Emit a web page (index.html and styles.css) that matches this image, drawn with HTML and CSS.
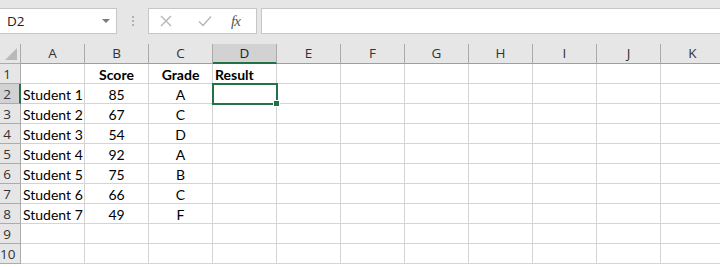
FILE: index.html
```html
<!DOCTYPE html>
<html lang="en">
<head>
  <meta charset="UTF-8" />
  <title>Sheet</title>
  <link rel="stylesheet" href="styles.css">
</head>
<body>
  <div class="formula-row">
    <div class="name-box">
      <span>D2</span>
      <span class="drop-arrow"></span>
    </div>
    <div class="grip">
      <span></span><span></span><span></span>
    </div>
    <div class="fx-buttons">
      <svg class="fx-cancel" width="12" height="12" viewBox="0 0 12 12"><path d="M1 1 L11 11 M11 1 L1 11" stroke="#b4b4b4" stroke-width="1.3" fill="none"/></svg>
      <svg class="fx-enter" width="14" height="12" viewBox="0 0 14 12"><path d="M1 6.5 L5 10.5 L13 1.5" stroke="#b4b4b4" stroke-width="1.3" fill="none"/></svg>
      <span class="fx-label">fx</span>
    </div>
    <div class="formula-input"></div>
  </div>

  <div class="sheet">
    <div class="corner"><span class="corner-tri"></span></div>
    <div class="col-head">A</div>
    <div class="col-head">B</div>
    <div class="col-head">C</div>
    <div class="col-head active">D</div>
    <div class="col-head">E</div>
    <div class="col-head">F</div>
    <div class="col-head">G</div>
    <div class="col-head">H</div>
    <div class="col-head">I</div>
    <div class="col-head">J</div>
    <div class="col-head">K</div>

    <div class="row-head">1</div>
    <div class="cell"></div>
    <div class="cell bold center">Score</div>
    <div class="cell bold center">Grade</div>
    <div class="cell bold">Result</div>
    <div class="cell"></div><div class="cell"></div><div class="cell"></div><div class="cell"></div><div class="cell"></div><div class="cell"></div><div class="cell"></div>

    <div class="row-head active">2</div>
    <div class="cell">Student 1</div>
    <div class="cell center">85</div>
    <div class="cell center">A</div>
    <div class="cell selected"></div>
    <div class="cell"></div><div class="cell"></div><div class="cell"></div><div class="cell"></div><div class="cell"></div><div class="cell"></div><div class="cell"></div>

    <div class="row-head">3</div>
    <div class="cell">Student 2</div>
    <div class="cell center">67</div>
    <div class="cell center">C</div>
    <div class="cell"></div>
    <div class="cell"></div><div class="cell"></div><div class="cell"></div><div class="cell"></div><div class="cell"></div><div class="cell"></div><div class="cell"></div>

    <div class="row-head">4</div>
    <div class="cell">Student 3</div>
    <div class="cell center">54</div>
    <div class="cell center">D</div>
    <div class="cell"></div>
    <div class="cell"></div><div class="cell"></div><div class="cell"></div><div class="cell"></div><div class="cell"></div><div class="cell"></div><div class="cell"></div>

    <div class="row-head">5</div>
    <div class="cell">Student 4</div>
    <div class="cell center">92</div>
    <div class="cell center">A</div>
    <div class="cell"></div>
    <div class="cell"></div><div class="cell"></div><div class="cell"></div><div class="cell"></div><div class="cell"></div><div class="cell"></div><div class="cell"></div>

    <div class="row-head">6</div>
    <div class="cell">Student 5</div>
    <div class="cell center">75</div>
    <div class="cell center">B</div>
    <div class="cell"></div>
    <div class="cell"></div><div class="cell"></div><div class="cell"></div><div class="cell"></div><div class="cell"></div><div class="cell"></div><div class="cell"></div>

    <div class="row-head">7</div>
    <div class="cell">Student 6</div>
    <div class="cell center">66</div>
    <div class="cell center">C</div>
    <div class="cell"></div>
    <div class="cell"></div><div class="cell"></div><div class="cell"></div><div class="cell"></div><div class="cell"></div><div class="cell"></div><div class="cell"></div>

    <div class="row-head">8</div>
    <div class="cell">Student 7</div>
    <div class="cell center">49</div>
    <div class="cell center">F</div>
    <div class="cell"></div>
    <div class="cell"></div><div class="cell"></div><div class="cell"></div><div class="cell"></div><div class="cell"></div><div class="cell"></div><div class="cell"></div>

    <div class="row-head">9</div>
    <div class="cell"></div><div class="cell"></div><div class="cell"></div><div class="cell"></div>
    <div class="cell"></div><div class="cell"></div><div class="cell"></div><div class="cell"></div><div class="cell"></div><div class="cell"></div><div class="cell"></div>

    <div class="row-head">10</div>
    <div class="cell"></div><div class="cell"></div><div class="cell"></div><div class="cell"></div>
    <div class="cell"></div><div class="cell"></div><div class="cell"></div><div class="cell"></div><div class="cell"></div><div class="cell"></div><div class="cell"></div>
  </div>
</body>
</html>
```

FILE: styles.css
```css
body {
  margin: 0;
  background: #fff;
  font-family: 'Lato', 'Liberation Sans', sans-serif;
  overflow: hidden;
  width: 720px;
  height: 267px;
}

.formula-row {
  height: 44px;
  display: flex;
  align-items: flex-start;
  padding-top: 8px;
  box-sizing: border-box;
  background: #e6e6e6;
}

.name-box {
  width: 117px;
  height: 26px;
  box-sizing: border-box;
  background: #fff;
  border: 1px solid #c6c6c6;
  border-left: none;
  display: flex;
  align-items: center;
  justify-content: space-between;
  padding: 0 6px 0 7px;
  font-family: 'Open Sans', sans-serif;
  font-size: 13.5px;
  color: #222;
}

.drop-arrow {
  width: 0;
  height: 0;
  border-left: 4px solid transparent;
  border-right: 4px solid transparent;
  border-top: 4px solid #7a7a7a;
}

.grip {
  width: 31px;
  height: 26px;
  display: flex;
  flex-direction: column;
  align-items: center;
  justify-content: center;
  gap: 2px;
}

.grip span {
  width: 2px;
  height: 2px;
  background: #b0b0b0;
}

.fx-buttons {
  width: 109px;
  height: 26px;
  box-sizing: border-box;
  background: #fff;
  border: 1px solid #c6c6c6;
  display: flex;
  align-items: center;
  padding-left: 11px;
}

.fx-enter {
  margin-left: 26px;
}

.fx-label {
  margin-left: 19px;
  font-family: 'Liberation Serif', serif;
  font-style: italic;
  font-size: 15px;
  color: #555;
  letter-spacing: -1px;
}

.formula-input {
  flex: 1;
  margin-left: 4px;
  height: 26px;
  box-sizing: border-box;
  background: #fff;
  border: 1px solid #c6c6c6;
  border-right: none;
}

.sheet {
  display: grid;
  grid-template-columns: 21px repeat(11, 64px);
  grid-template-rows: repeat(11, 20px);
  background: #fff;
}

.corner,
.col-head,
.row-head {
  background: #e6e6e6;
  box-sizing: border-box;
  color: #333;
  font-family: 'Open Sans', sans-serif;
  font-size: 13.5px;
}

.corner {
  border-right: 1px solid #ababab;
  border-bottom: 1px solid #ababab;
  position: relative;
}

.corner-tri {
  position: absolute;
  left: 5px;
  top: 4px;
  width: 0;
  height: 0;
  border-left: 12px solid transparent;
  border-bottom: 12px solid #b9b9b9;
}

.col-head {
  border-right: 1px solid #ababab;
  border-bottom: 1px solid #9e9e9e;
  text-align: center;
  line-height: 18px;
}

.col-head.active {
  background: #d2d2d2;
  border-bottom: 2px solid #217346;
  color: #222;
}

.row-head {
  border-right: 1px solid #ababab;
  border-bottom: 1px solid #ababab;
  text-align: center;
  padding-right: 6px;
  line-height: 20px;
}

.row-head.active {
  background: #d2d2d2;
  border-right: 2px solid #217346;
  padding-right: 5px;
}

.cell {
  box-sizing: border-box;
  border-right: 1px solid #d4d4d4;
  border-bottom: 1px solid #d4d4d4;
  padding: 1px 2px 0;
  font-size: 14px;
  line-height: 19px;
  color: #000;
  white-space: nowrap;
}

.center {
  text-align: center;
}

.bold {
  font-weight: bold;
}

.selected {
  position: relative;
  outline: 2px solid #217346;
  outline-offset: -1px;
}

.selected::after {
  content: '';
  position: absolute;
  right: -4px;
  bottom: -4px;
  width: 5px;
  height: 5px;
  background: #217346;
  border: 1px solid #fff;
}
```
